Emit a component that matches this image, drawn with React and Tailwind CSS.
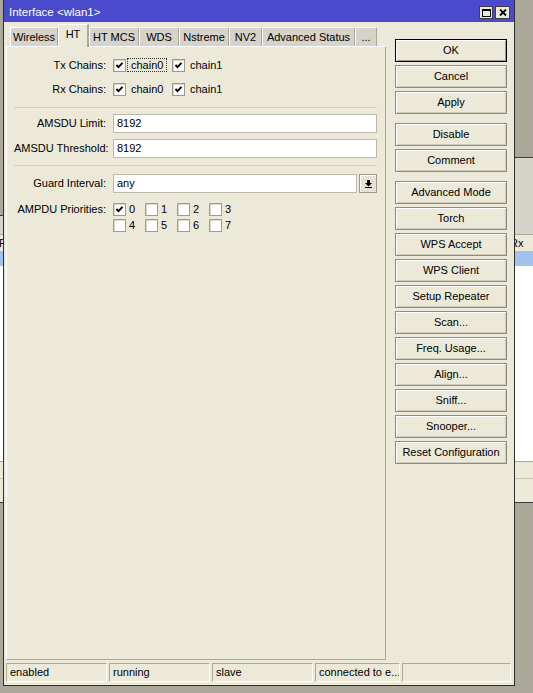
import React from 'react';

const font = "font-['Liberation_Sans',Arial,sans-serif]";

const tabs = [
  ['Wireless', 48],
  ['HT', 31],
  ['HT MCS', 50],
  ['WDS', 40],
  ['Nstreme', 50],
  ['NV2', 33],
  ['Advanced Status', 93],
  ['...', 22],
];

const buttonGroups = [
  ['OK', 'Cancel', 'Apply'],
  ['Disable', 'Comment'],
  [
    'Advanced Mode',
    'Torch',
    'WPS Accept',
    'WPS Client',
    'Setup Repeater',
    'Scan...',
    'Freq. Usage...',
    'Align...',
    'Sniff...',
    'Snooper...',
    'Reset Configuration',
  ],
];

const statusCells = [
  ['enabled', 'w-[101px]'],
  ['running', 'w-[101px]'],
  ['slave', 'w-[101px]'],
  ['connected to e...', 'w-[85px]'],
  ['', 'w-[109px]'],
];

function Check({ checked }) {
  return (
    <span className="w-[13px] h-[13px] shrink-0 bg-white border border-[#9d998b] shadow-[inset_1px_1px_0_#dcd9cc] flex items-center justify-center">
      {checked && (
        <svg width="9" height="9" viewBox="0 0 9 9">
          <polyline points="1.5,4 3.5,6.2 7.5,1.8" fill="none" stroke="#000" strokeWidth="1.9" />
        </svg>
      )}
    </span>
  );
}

function CheckItem({ label, checked, focused, wide }) {
  return (
    <div className={`flex items-center ${wide ? 'w-[59px]' : 'w-[32px]'}`}>
      <Check checked={checked} />
      {wide ? (
        <span
          className={`ml-[1px] px-[3px] leading-[12px] border border-dotted ${
            focused ? 'border-[#333]' : 'border-transparent'
          }`}
        >
          {label}
        </span>
      ) : (
        <span className="ml-[3px]">{label}</span>
      )}
    </div>
  );
}

function Row({ label, className = '', children }) {
  return (
    <div className={`flex items-center ${className}`}>
      <div className="w-[92px] text-right mr-[7px] whitespace-nowrap">{label}</div>
      {children}
    </div>
  );
}

function Field({ value }) {
  return (
    <div className="flex-1 h-full bg-white border border-[#bcb8aa] pl-[3px] flex items-center">{value}</div>
  );
}

function Button({ label, primary }) {
  return (
    <div
      className={`h-[23px] flex items-center justify-center bg-[#ece9d8] ${
        primary
          ? 'border border-black shadow-[inset_1px_1px_0_#fff,inset_-1px_-1px_0_#9d998b]'
          : 'border border-[#8f8b7e] shadow-[inset_1px_1px_0_#fff,inset_-1px_-1px_0_#cfcbbd]'
      }`}
    >
      {label}
    </div>
  );
}

// window lying behind the dialog, only its edges show
function BackWindow({ className, bandClass, header }) {
  return (
    <div className={`absolute flex flex-col ${className}`}>
      <div className="h-px bg-[#3c3c3c]" />
      <div className={`bg-[#d6d3ca] ${bandClass}`} />
      <div className="h-px bg-[#aca899]" />
      <div className="h-[16px] bg-[#ece9d8] flex items-center text-[11px]">{header}</div>
      <div className="h-[15px] bg-[#a2c2ee]" />
      <div className="h-[195px] bg-white" />
      <div className="h-px bg-[#aca899]" />
      <div className="h-[16px] bg-[#ece9d8]" />
      <div className="h-px bg-[#c8c4b6]" />
      <div className="h-[23px] bg-[#ece9d8]" />
      <div className="h-px bg-[#3c3c3c]" />
    </div>
  );
}

export default function App() {
  return (
    <div className={`relative w-[533px] h-[693px] overflow-hidden bg-[#aca899] text-[11px] text-black ${font}`}>
      <BackWindow
        className="left-[-100px] w-[104px] top-[215px]"
        bandClass="h-[18px]"
        header={<span className="ml-[99px]">F</span>}
      />
      <BackWindow
        className="left-[505px] w-[60px] top-[157px]"
        bandClass="h-[76px]"
        header={<span className="ml-[5px]">Rx</span>}
      />

      <div className="absolute left-[3px] top-[-1px] w-[512px] h-[687px] border border-[#2e2e2e] bg-[#ece9d8] flex flex-col">
        {/* title bar */}
        <div className="h-[22px] bg-[#4a4bcc] flex items-center justify-between pl-[5px] pr-[4px] pt-[3px]">
          <span className="text-white text-[11.5px]">Interface &lt;wlan1&gt;</span>
          <div className="flex gap-[2px]">
            <div className="w-[14px] h-[13px] bg-[#ece9d8] border border-[#404040] flex items-center justify-center">
              <svg width="9" height="8" viewBox="0 0 9 8">
                <rect x="0.5" y="0.5" width="8" height="7" fill="none" stroke="#000" />
                <rect x="0" y="0" width="9" height="2" fill="#000" />
              </svg>
            </div>
            <div className="w-[15px] h-[13px] bg-[#ece9d8] border border-[#404040] flex items-center justify-center">
              <svg width="8" height="7" viewBox="0 0 8 7">
                <path d="M1 0.5 L7 6.5 M7 0.5 L1 6.5" stroke="#000" strokeWidth="1.8" />
              </svg>
            </div>
          </div>
        </div>

        {/* body */}
        <div className="flex-1 flex">
          <div className="ml-[2px] w-[380px] flex flex-col">
            <div className="h-[24px] flex items-end pl-[4px]">
              {tabs.map(([name, w]) => {
                const active = name === 'HT';
                return (
                  <div
                    key={name}
                    style={{ width: w }}
                    className={
                      active
                        ? 'relative z-10 -mb-px h-[23px] bg-[#ece9d8] border-t border-l border-white border-r-2 border-r-[#aca899] flex items-center justify-center pb-[3px] whitespace-nowrap'
                        : 'h-[19px] bg-[#d6d3ca] border-t border-l border-white border-r border-r-[#aca899] flex items-center justify-center pt-[1px] whitespace-nowrap'
                    }
                  >
                    {name}
                  </div>
                );
              })}
            </div>

            <div className="flex-1 border-t border-l border-white border-r border-b border-r-[#aca899] border-b-[#aca899] pl-[7px] pr-[8px]">
              <Row label="Tx Chains:" className="mt-[9px] h-[18px]">
                <CheckItem label="chain0" checked focused wide />
                <CheckItem label="chain1" checked wide />
              </Row>
              <Row label="Rx Chains:" className="mt-[6px] h-[18px]">
                <CheckItem label="chain0" checked wide />
                <CheckItem label="chain1" checked wide />
              </Row>

              <div className="mt-[9px] h-px bg-[#d4d0c1]" />

              <Row label="AMSDU Limit:" className="mt-[6px] h-[19px]">
                <Field value="8192" />
              </Row>
              <Row label="AMSDU Threshold:" className="mt-[6px] h-[19px]">
                <Field value="8192" />
              </Row>

              <div className="mt-[7px] h-px bg-[#d4d0c1]" />

              <Row label="Guard Interval:" className="mt-[8px] h-[19px]">
                <Field value="any" />
                <div className="ml-[2px] w-[18px] h-full bg-[#e6e3d6] border border-[#9d998b] shadow-[inset_1px_1px_0_#fff] flex items-center justify-center">
                  <svg width="7" height="8" viewBox="0 0 7 8">
                    <rect x="2" y="0" width="3" height="3" fill="#000" />
                    <polygon points="0,3 7,3 3.5,6.5" fill="#000" />
                    <rect x="0" y="7" width="7" height="1" fill="#000" />
                  </svg>
                </div>
              </Row>

              <div className="mt-[8px] flex">
                <div className="w-[92px] text-right mr-[7px] h-[16px] flex items-center justify-end whitespace-nowrap">
                  AMPDU Priorities:
                </div>
                <div className="flex flex-col">
                  <div className="h-[16px] flex items-center">
                    {['0', '1', '2', '3'].map((n) => (
                      <CheckItem key={n} label={n} checked={n === '0'} />
                    ))}
                  </div>
                  <div className="h-[16px] flex items-center">
                    {['4', '5', '6', '7'].map((n) => (
                      <CheckItem key={n} label={n} />
                    ))}
                  </div>
                </div>
              </div>
            </div>
          </div>

          <div className="ml-[9px] w-[112px] pt-[17px] flex flex-col gap-[9px]">
            {buttonGroups.map((group, gi) => (
              <div key={gi} className="flex flex-col gap-[3px]">
                {group.map((b) => (
                  <Button key={b} label={b} primary={b === 'OK'} />
                ))}
              </div>
            ))}
          </div>
        </div>

        {/* status bar */}
        <div className="h-[25px] flex items-center gap-[2px] pl-[2px]">
          {statusCells.map(([text, w], i) => (
            <div
              key={i}
              className={`${w} h-[19px] border-t border-l border-[#aca899] border-r border-b border-r-white border-b-white pl-[3px] flex items-center whitespace-nowrap overflow-hidden`}
            >
              {text}
            </div>
          ))}
        </div>
      </div>
    </div>
  );
}
